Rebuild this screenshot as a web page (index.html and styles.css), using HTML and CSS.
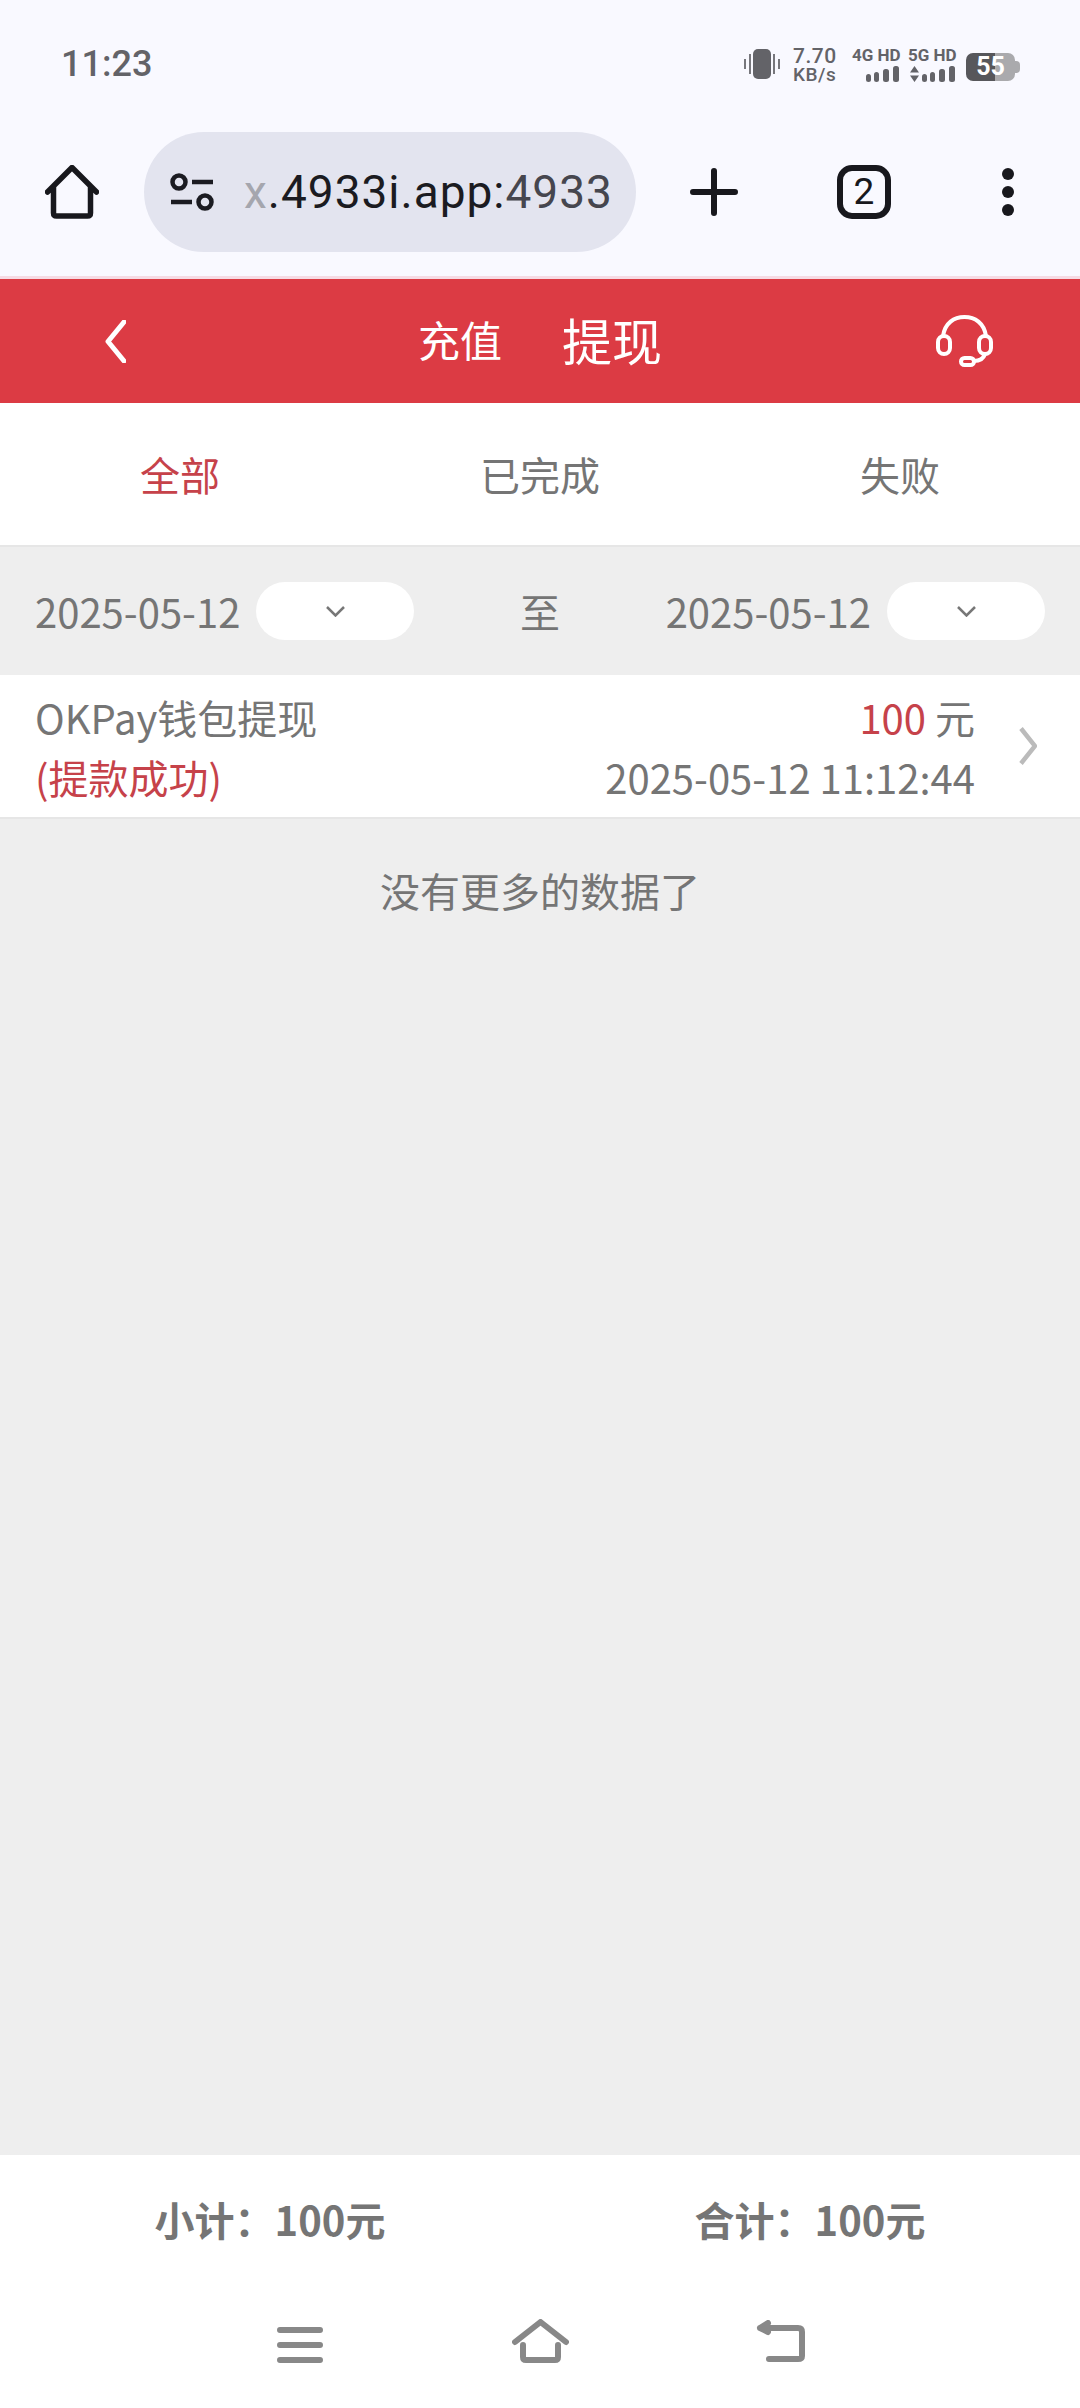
FILE: index.html
```html
<!doctype html>
<html lang="zh-CN">
<head>
    <meta charset="utf-8"/>
    <title>提现记录</title>
    <link rel="stylesheet" href="styles.css">
</head>
<body>
<div class="status">
    <span class="time">11:23</span>
    <div class="status-right">
        <svg class="vibrate" viewBox="0 0 36 30"><rect x="9" y="0" width="18" height="30" rx="5" fill="#636368"/><path d="M1 10v10M6 5v20M30 5v20M35 10v10" stroke="#77777c" stroke-width="2" fill="none"/></svg>
        <div class="speed"><span>7.70</span><span class="speed-unit">KB/s</span></div>
        <div class="sig">
            <span class="sig-label">4G HD</span>
            <svg class="sig-bars" viewBox="0 0 48 16"><rect x="14" y="8" width="5" height="8" rx="2.5"/><rect x="22" y="6" width="5" height="10" rx="2.5"/><rect x="31" y="3" width="6" height="13" rx="2.5"/><rect x="41" y="0" width="6" height="16" rx="2.5"/></svg>
        </div>
        <div class="sig">
            <span class="sig-label">5G HD</span>
            <svg class="sig-bars" viewBox="0 0 48 16"><path d="M2 6.500L6.500 0L11 6.500zM2 9.500L6.500 16L11 9.500z"/><rect x="14" y="8" width="5" height="8" rx="2.500"/><rect x="22" y="6" width="5" height="10" rx="2.500"/><rect x="31" y="3" width="6" height="13" rx="2.500"/><rect x="41" y="0" width="6" height="16" rx="2.500"/></svg>
        </div>
        <div class="battery">55</div>
    </div>
</div>

<div class="toolbar">
    <div class="slot slot-home">
        <svg class="ic-home" viewBox="0 0 54 54"><path d="M2.500 27L27 2.500L51.500 27M8.500 22V48Q8.500 51 11.500 51H42.500Q45.500 51 45.500 48V22"/></svg>
    </div>
    <div class="url">
        <svg class="ic-tune" viewBox="0 0 44 38"><circle cx="9" cy="9" r="6.500"/><circle cx="35" cy="29" r="6.500"/><path d="M22 9H43M1 29H22"/></svg>
        <span class="url-text"><span class="url-sub">x</span>.4933i.app:<span class="url-fade">4933</span></span>
    </div>
    <div class="slot slot-plus">
        <svg class="ic-plus" viewBox="0 0 48 48"><path d="M24 3V45M3 24H45"/></svg>
    </div>
    <div class="slot slot-tab">
        <div class="tab-count">2</div>
    </div>
    <div class="slot slot-more">
        <span class="dot"></span><span class="dot"></span><span class="dot"></span>
    </div>
</div>

<div class="head">
    <div class="head-back">
        <svg viewBox="0 0 21 43"><path d="M19 2L3 21.500L19 41"/></svg>
    </div>
    <div class="head-title">
        <span class="head-tab">充值</span>
        <span class="head-tab head-tab-on">提现</span>
    </div>
    <div class="head-service">
        <svg viewBox="0 0 57 52"><rect x="2" y="21" width="12" height="18" rx="6"/><rect x="43" y="21" width="12" height="18" rx="6"/><path d="M7 21C9 8 18 2 28.500 2C39 2 48 8 50 21M49 39C47 45 42 46 38 46"/><rect x="25" y="43" width="13" height="7" rx="3.500"/></svg>
    </div>
</div>

<ul class="tabs">
    <li class="current">全部</li>
    <li>已完成</li>
    <li>失败</li>
</ul>

<div class="main">
    <div class="dates">
        <div class="date">
            <span>2025-05-12</span>
            <div class="date-btn"><svg viewBox="0 0 19 11"><path d="M1 1L9.500 9.500L18 1"/></svg></div>
        </div>
        <span>至</span>
        <div class="date">
            <span>2025-05-12</span>
            <div class="date-btn"><svg viewBox="0 0 19 11"><path d="M1 1L9.500 9.500L18 1"/></svg></div>
        </div>
    </div>

    <div class="item">
        <div class="item-left">
            <div>OKPay钱包提现</div>
            <div class="red">(提款成功)</div>
        </div>
        <div class="item-right">
            <div><span class="red">100</span> 元</div>
            <div>2025-05-12 11:12:44</div>
        </div>
        <svg class="item-arrow" viewBox="0 0 18 38"><path d="M2 1.500L16 19L2 36.500"/></svg>
    </div>

    <div class="nomore">没有更多的数据了</div>
</div>

<div class="total">
    <div>小计：100元</div>
    <div>合计：100元</div>
</div>

<div class="nav">
    <div class="nav-item">
        <svg class="nav-menu" viewBox="0 0 46 36"><path d="M3 3H43M3 18H43M3 33H43"/></svg>
    </div>
    <div class="nav-item">
        <svg class="nav-home" viewBox="0 0 57 44"><path d="M3 23L28.500 3L54 23M11 26V38Q11 41 14 41H43Q46 41 46 38V26"/></svg>
    </div>
    <div class="nav-item">
        <svg class="nav-back" viewBox="0 0 50 43"><path d="M5 8H43Q47 8 47 12V36Q47 39 43 39H14M13 3L5 8L13 12"/></svg>
    </div>
</div>
</body>
</html>
```

FILE: styles.css
```css
body, ul, li {
    margin: 0;
    padding: 0;
    list-style: none;
}

body {
    width: 1080px;
    height: 2408px;
    display: flex;
    flex-direction: column;
    overflow: hidden;
    font-family: "Noto Sans CJK SC", "Noto Sans", sans-serif;
    font-size: 40px;
    color: #757575;
    background: #fff;
}

svg {
    display: block;
}

/* status bar */
.status {
    height: 126px;
    flex: none;
    display: flex;
    align-items: center;
    justify-content: space-between;
    padding: 0 60px 0 61px;
    background: #f9f9ff;
    font-family: Roboto, sans-serif;
    color: #636368;
}

.time {
    font-size: 36px;
    font-weight: 500;
    margin-top: 2px;
}

.status-right {
    display: flex;
    align-items: center;
    margin-top: 2px;
}

.vibrate {
    width: 36px;
    height: 30px;
    margin-right: 13px;
}

.speed {
    width: 44px;
    margin-right: 15px;
    display: flex;
    flex-direction: column;
    font-size: 21px;
    line-height: 20px;
    font-weight: 500;
    letter-spacing: 0.5px;
}

.speed-unit {
    font-size: 19px;
    line-height: 17px;
}

.sig {
    width: 48px;
    margin-right: 8px;
    display: flex;
    flex-direction: column;
}

.sig-label {
    font-size: 17px;
    line-height: 16px;
    font-weight: 700;
    white-space: nowrap;
}

.sig-bars {
    width: 48px;
    height: 16px;
    margin-top: 3px;
    fill: #636368;
}

.battery {
    position: relative;
    width: 49px;
    height: 28px;
    margin: 5px 5px 0 2px;
    border-radius: 7px;
    background: linear-gradient(90deg, #57575b 29px, #aaaaad 29px);
    color: #fff;
    font-size: 25px;
    font-weight: 700;
    line-height: 28px;
    text-align: center;
}

.battery:after {
    content: "";
    position: absolute;
    right: -5px;
    top: 8px;
    width: 5px;
    height: 12px;
    border-radius: 0 4px 4px 0;
    background: #aaaaad;
}

/* browser toolbar */
.toolbar {
    height: 120px;
    flex: none;
    display: flex;
    padding: 6px 0 24px;
    background: #f9f9ff;
}

.slot {
    display: flex;
    align-items: center;
    justify-content: center;
}

.slot-home {
    width: 144px;
}

.slot-plus {
    width: 156px;
}

.slot-tab,
.slot-more {
    width: 144px;
}

.slot-more {
    flex-direction: column;
    gap: 6px;
}

.ic-home {
    width: 54px;
    height: 54px;
    fill: none;
    stroke: #18181d;
    stroke-width: 5.500;
    stroke-linecap: round;
    stroke-linejoin: round;
}

.url {
    width: 492px;
    display: flex;
    align-items: center;
    gap: 30px;
    padding-left: 26px;
    box-sizing: border-box;
    border-radius: 60px;
    background: #e3e4ef;
    font-family: Roboto, sans-serif;
    font-size: 46px;
    letter-spacing: 1px;
    color: #1b1b21;
}

.ic-tune {
    width: 44px;
    height: 38px;
    flex: none;
    fill: none;
    stroke: #1b1b21;
    stroke-width: 4.500;
}

.url-text {
    white-space: nowrap;
}

.url-sub {
    color: #a5a6ae;
}

.url-fade {
    color: #46464e;
}

.ic-plus {
    width: 48px;
    height: 48px;
    fill: none;
    stroke: #18181d;
    stroke-width: 6;
    stroke-linecap: round;
}

.tab-count {
    width: 54px;
    height: 54px;
    box-sizing: border-box;
    border: 6px solid #18181d;
    border-radius: 15px;
    font-family: Roboto, sans-serif;
    font-size: 37px;
    line-height: 42px;
    text-align: center;
    color: #18181d;
}

.dot {
    width: 12px;
    height: 12px;
    border-radius: 50%;
    background: #18181d;
}

/* red header */
.head {
    height: 124px;
    flex: none;
    display: grid;
    grid-template-columns: 1fr auto 1fr;
    align-items: center;
    border-top: 3px solid #f6dbe4;
    background: #dc3b44;
    color: #fff;
}

.head-back {
    padding-left: 105px;
}

.head-back svg {
    width: 21px;
    height: 43px;
    fill: none;
    stroke: #fff;
    stroke-width: 5;
    stroke-linecap: round;
    stroke-linejoin: round;
}

.head-title {
    display: flex;
    align-items: center;
    gap: 60px;
    margin-top: -5px;
}

.head-tab {
    font-size: 42px;
}

.head-tab-on {
    font-size: 50px;
}

.head-service {
    justify-self: end;
    padding-right: 87px;
}

.head-service svg {
    width: 57px;
    height: 52px;
    fill: none;
    stroke: #fff;
    stroke-width: 4;
    stroke-linecap: round;
}

/* tabs */
.tabs {
    height: 142px;
    flex: none;
    display: grid;
    grid-template-columns: repeat(3, 1fr);
    align-items: center;
    text-align: center;
    border-bottom: 2px solid #e6e6e6;
}

.tabs .current,
.red {
    color: #c6424a;
}

/* list area */
.main {
    flex: 1;
    background: #eee;
}

.dates {
    height: 128px;
    display: flex;
    align-items: center;
    justify-content: space-between;
    padding: 0 35px;
}

.date {
    display: flex;
    align-items: center;
    gap: 16px;
}

.date-btn {
    width: 158px;
    height: 58px;
    display: flex;
    align-items: center;
    justify-content: center;
    border-radius: 29px;
    background: #fff;
}

.date-btn svg {
    width: 19px;
    height: 11px;
    fill: none;
    stroke: #777;
    stroke-width: 2.500;
}

.item {
    display: flex;
    align-items: center;
    height: 142px;
    padding: 0 43px 0 35px;
    border-bottom: 2px solid #e6e6e6;
    background: #fff;
    line-height: 60px;
}

.item-left {
    flex: 1;
    margin-top: 2px;
}

.item-right {
    text-align: right;
    margin-top: 2px;
}

.item-arrow {
    width: 18px;
    height: 38px;
    margin-left: 44px;
    fill: none;
    stroke: #bbb;
    stroke-width: 4.500;
}

.nomore {
    padding-top: 41px;
    line-height: 60px;
    text-align: center;
}

/* bottom totals */
.total {
    height: 128px;
    flex: none;
    display: grid;
    grid-template-columns: 1fr 1fr;
    align-items: center;
    text-align: center;
    font-weight: 700;
}

/* android navigation */
.nav {
    height: 125px;
    flex: none;
    display: flex;
    justify-content: center;
    align-items: flex-start;
}

.nav-item {
    width: 240px;
    height: 80px;
    display: flex;
    align-items: flex-end;
    justify-content: center;
}

.nav-item svg {
    fill: none;
    stroke: #888;
    stroke-width: 6;
    stroke-linecap: round;
    stroke-linejoin: round;
}

.nav-menu {
    width: 46px;
    height: 36px;
}

.nav-home {
    width: 57px;
    height: 44px;
}

.nav-back {
    width: 50px;
    height: 43px;
}
```
